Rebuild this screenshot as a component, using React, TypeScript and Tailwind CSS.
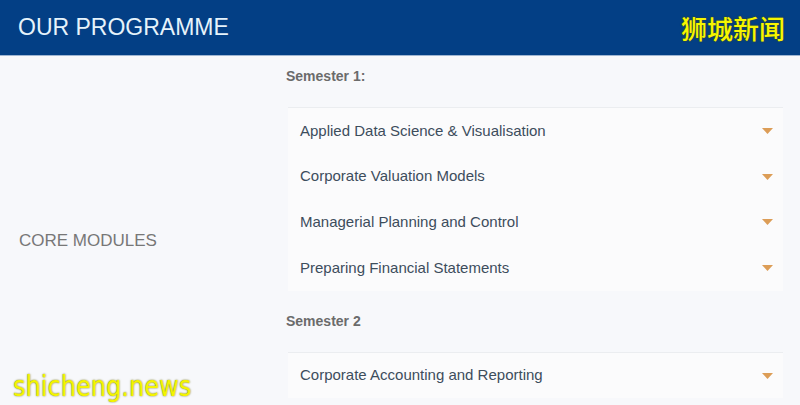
const semesters = [
  {
    label: 'Semester 1:',
    modules: [
      'Applied Data Science & Visualisation',
      'Corporate Valuation Models',
      'Managerial Planning and Control',
      'Preparing Financial Statements',
    ],
  },
  {
    label: 'Semester 2',
    modules: ['Corporate Accounting and Reporting'],
  },
];

function Caret() {
  return (
    <svg width="11" height="6" viewBox="0 0 11 6" className="shrink-0">
      <path d="M0 0 H11 L5.5 6 Z" fill="#dc9d57" />
    </svg>
  );
}

export default function App() {
  return (
    <div
      className="relative h-[405px] w-[800px] overflow-hidden bg-[#f7f8fb]"
      style={{ fontFamily: '"Liberation Sans", Arial, sans-serif' }}
    >
      {/* Header */}
      <div className="flex h-[56px] items-center justify-between border-b border-[#9fb6d3] bg-[#033f85] pl-[18px] pr-[15px]">
        <h1 className="text-[23px] leading-none text-[#e6f3fb]">OUR PROGRAMME</h1>
        <span
          className="text-[26px] font-medium leading-none text-[#f6f600] [text-shadow:0_0_2px_#4a4a00]"
          style={{ fontFamily: '"Noto Sans CJK SC", sans-serif' }}
        >
          狮城新闻
        </span>
      </div>

      <div className="flex">
        {/* Left label */}
        <div className="flex w-[286px] shrink-0 items-start pl-[19px] pt-[175px]">
          <span className="text-[17px] leading-5 text-[#777]">CORE MODULES</span>
        </div>

        {/* Modules */}
        <div className="flex w-[497px] flex-col">
          {semesters.map((s) => (
            <div key={s.label} className="flex flex-col pb-[10px]">
              <div className="pb-[21px] pt-[10px] text-[14px] font-bold leading-5 text-[#6b6b6b]">{s.label}</div>
              <div className="ml-[2px] flex flex-col border-t border-[#ebedf0]">
                {s.modules.map((m) => (
                  <div
                    key={m}
                    className="flex h-[45.7px] items-center justify-between bg-[#fbfbfc] pl-[12px] pr-[10px]"
                  >
                    <span className="text-[15px] text-[#3d4d5c]">{m}</span>
                    <Caret />
                  </div>
                ))}
              </div>
            </div>
          ))}
        </div>
      </div>

      {/* Watermark */}
      <div
        className="absolute bottom-[4px] left-[13px] origin-left scale-x-[0.83] text-[29px] leading-none text-[#f4f400] [text-shadow:0_0_2px_#6a6a00]"
        style={{ fontFamily: '"DejaVu Sans", sans-serif' }}
      >
        shicheng.news
      </div>
    </div>
  );
}
